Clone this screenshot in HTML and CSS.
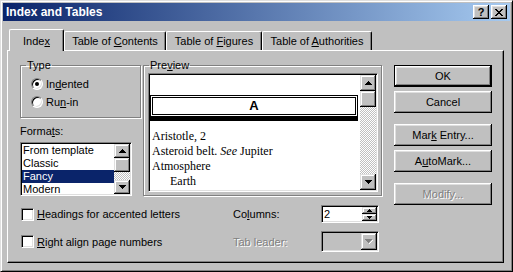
FILE: index.html
```html
<!DOCTYPE html>
<html lang="en">
<head>
    <meta charset="UTF-8">
    <title>Index and Tables</title>
    <link rel="stylesheet" href="styles.css">
</head>
<body>
    <div class="window">
        <!-- caption -->
        <div class="titlebar">
            <span class="title">Index and Tables</span>
            <div class="caption-btns">
                <span class="cap-btn help">?</span>
                <span class="cap-btn">
                    <svg width="8" height="7" viewBox="0 0 8 7" shape-rendering="crispEdges"><path d="M0 0h2v1h1v1h2V1h1V0h2v1H7v1H6v1H5v1h1v1h1v1h1v1H6V6H5V5H3v1H2v1H0V6h1V5h1V4h1V3H2V2H1V1H0z"/></svg>
                </span>
            </div>
        </div>

        <div class="tabs">
            <div class="tab active"><span>Inde<u>x</u></span></div>
            <div class="tab w-contents"><span>Table of <u>C</u>ontents</span></div>
            <div class="tab w-figures"><span>Table of <u>F</u>igures</span></div>
            <div class="tab w-authorities"><span>Table of <u>A</u>uthorities</span></div>
        </div>

        <div class="panel">
            <div class="left">
                <div class="top-row">
                    <div class="col-type">
                        <fieldset class="group type-group">
                            <legend>Type</legend>
                            <div class="radio"><span class="radio-box checked"></span><span>In<u>d</u>ented</span></div>
                            <div class="radio"><span class="radio-box"></span><span>Ru<u>n</u>-in</span></div>
                        </fieldset>
                        <div class="field-label">Forma<u>t</u>s:</div>
                        <div class="listbox">
                            <ul class="items">
                                <li>From template</li>
                                <li>Classic</li>
                                <li class="selected">Fancy</li>
                                <li>Modern</li>
                            </ul>
                            <div class="vscroll small">
                                <span class="sb-btn"><svg width="7" height="4" shape-rendering="crispEdges"><path d="M3 0h1v1h1v1h1v1h1v1H0V3h1V2h1V1h1z"/></svg></span>
                                <span class="sb-thumb"></span>
                                <span class="sb-track"></span>
                                <span class="sb-btn"><svg width="7" height="4" shape-rendering="crispEdges"><path d="M0 0h7v1H6v1H5v1H4v1H3V3H2V2H1V1H0z"/></svg></span>
                            </div>
                        </div>
                    </div>

                    <fieldset class="group preview-group">
                        <legend>Pre<u>v</u>iew</legend>
                        <div class="preview">
                            <div class="page">
                                <div class="letter">A</div>
                                <div class="entry">Aristotle, 2</div>
                                <div class="entry">Asteroid belt. <i>See</i> Jupiter</div>
                                <div class="entry">Atmosphere</div>
                                <div class="entry sub">Earth</div>
                            </div>
                            <div class="vscroll">
                                <span class="sb-btn"><svg width="7" height="4" shape-rendering="crispEdges"><path d="M3 0h1v1h1v1h1v1h1v1H0V3h1V2h1V1h1z"/></svg></span>
                                <span class="sb-thumb"></span>
                                <span class="sb-track"></span>
                                <span class="sb-btn"><svg width="7" height="4" shape-rendering="crispEdges"><path d="M0 0h7v1H6v1H5v1H4v1H3V3H2V2H1V1H0z"/></svg></span>
                            </div>
                        </div>
                    </fieldset>
                </div>

                <div class="options">
                    <div class="check"><span class="check-box"></span><span><u>H</u>eadings for accented letters</span></div>
                    <div>Co<u>l</u>umns:</div>
                    <div class="spin">
                        <span class="spin-val">2</span>
                        <div class="spin-btns">
                            <span class="spin-btn"><svg width="5" height="3" shape-rendering="crispEdges"><path d="M2 0h1v1h1v1h1v1H0V2h1V1h1z"/></svg></span>
                            <span class="spin-btn"><svg width="5" height="3" shape-rendering="crispEdges"><path d="M0 0h5v1H4v1H3v1H2V2H1V1H0z"/></svg></span>
                        </div>
                    </div>

                    <div class="check"><span class="check-box"></span><span><u>R</u>ight align page numbers</span></div>
                    <div class="disabled">Tab leader:</div>
                    <div class="combo">
                        <span class="combo-btn"><svg width="8" height="5" shape-rendering="crispEdges"><path d="M0 0h7v1H6v1H5v1H4v1H3V3H2V2H1V1H0z" fill="#808080"/><path d="M7 1h1v1H7v1H6v1H5v1H4V4h1V3h1V2h1z" fill="#fff"/></svg></span>
                    </div>
                </div>
            </div>

            <div class="buttons">
                <button class="btn default">OK</button>
                <button class="btn">Cancel</button>
                <button class="btn spaced">Mar<u>k</u> Entry...</button>
                <button class="btn">A<u>u</u>toMark...</button>
                <button class="btn spaced disabled">Modify...</button>
            </div>
        </div>
    </div>
</body>
</html>
```

FILE: styles.css
```css
* {
    box-sizing: border-box;
}
body {
    margin: 0;
    font-family: "Liberation Sans", Arial, sans-serif;
    font-size: 11px;
    color: #000;
}
u {
    text-decoration: underline;
}

/* window frame */
.window {
    width: 513px;
    height: 272px;
    background: #c0c0c0;
    border: 1px solid;
    border-color: #dfdfdf #000 #000 #dfdfdf;
    box-shadow: inset 1px 1px #fff, inset -1px -1px #808080;
    padding: 2px;
}
.titlebar {
    height: 18px;
    display: flex;
    align-items: center;
    justify-content: space-between;
    padding: 0 3px 0 3px;
    background: linear-gradient(to right, #0a246a, #a6caf0);
    color: #fff;
    font-weight: bold;
    font-size: 12px;
}
.caption-btns {
    display: flex;
    gap: 2px;
}
.cap-btn {
    width: 16px;
    height: 14px;
    display: flex;
    align-items: center;
    justify-content: center;
    background: #c0c0c0;
    color: #000;
    font-size: 11px;
    box-shadow: inset -1px -1px #000, inset 1px 1px #fff, inset -2px -2px #808080, inset 2px 2px #dfdfdf;
}
.cap-btn svg {
    margin-top: 1px;
}

/* tabs */
.tabs {
    display: flex;
    align-items: flex-end;
    height: 21px;
    margin: 8px 0 0 4px;
    padding-left: 2px;
}
.tab {
    height: 19px;
    display: flex;
    justify-content: center;
    padding-top: 3px;
    border-top: 1px solid #fff;
    border-left: 1px solid #fff;
    border-right: 1px solid #000;
    border-radius: 2px 2px 0 0;
    box-shadow: inset -1px 0 #808080;
    white-space: nowrap;
}
.tab.active {
    width: 55px;
    height: 22px;
    margin-bottom: -1px;
    padding-top: 5px;
    position: relative;
    z-index: 1;
    background: #c0c0c0;
}
.w-contents { width: 102px; }
.w-figures { width: 96px; }
.w-authorities { width: 110px; }

.panel {
    display: flex;
    gap: 12px;
    height: 213px;
    margin: 0 6px 0 4px;
    padding: 8px 0 0 12px;
    border: 1px solid;
    border-color: #fff #000 #000 #fff;
    box-shadow: inset -1px -1px #808080;
}
.left {
    width: 362px;
    display: flex;
    flex-direction: column;
}
.top-row {
    display: flex;
    gap: 2px;
}
.col-type {
    width: 121px;
}

/* group boxes */
.group {
    margin: 0;
    padding: 0;
    min-width: 0;
    border: 1px solid #808080;
    box-shadow: inset 1px 1px #fff, 1px 1px #fff;
}
.group legend {
    margin-left: 5px;
    padding: 0 1px;
    line-height: 13px;
}
.type-group {
    width: 121px;
    height: 59px;
    padding-top: 3px;
}
.radio {
    display: flex;
    align-items: center;
    gap: 3px;
    height: 18px;
    margin-left: 10px;
}
.radio-box {
    width: 12px;
    height: 12px;
    border-radius: 50%;
    background: #fff;
    border: 1px solid;
    border-color: #808080 #fff #fff #808080;
    box-shadow: inset 1px 1px #000, inset -1px -1px #dfdfdf;
    display: flex;
    align-items: center;
    justify-content: center;
}
.radio-box.checked::after {
    content: "";
    width: 4px;
    height: 4px;
    border-radius: 50%;
    background: #000;
}
.field-label {
    margin-top: 7px;
    line-height: 13px;
}

/* sunken fields */
.listbox,
.preview,
.spin,
.combo {
    display: flex;
    background: #fff;
    border: 1px solid;
    border-color: #808080 #fff #fff #808080;
    box-shadow: inset 1px 1px #000, inset -1px -1px #dfdfdf;
    padding: 1px;
}
.listbox {
    width: 112px;
    height: 54px;
    margin-top: 4px;
}
.items {
    flex: 1;
    margin: 0;
    padding: 0;
    list-style: none;
    overflow: hidden;
}
.items li {
    height: 13px;
    line-height: 13px;
    padding-left: 1px;
    white-space: nowrap;
}
.items li.selected {
    background: #0a246a;
    color: #fff;
}

/* scroll bars */
.vscroll {
    width: 16px;
    display: flex;
    flex-direction: column;
}
.sb-btn,
.sb-thumb,
.spin-btn,
.combo-btn {
    display: flex;
    align-items: center;
    justify-content: center;
    background: #c0c0c0;
    box-shadow: inset -1px -1px #000, inset 1px 1px #dfdfdf, inset -2px -2px #808080, inset 2px 2px #fff;
}
.sb-btn,
.sb-thumb {
    height: 16px;
}
.vscroll.small .sb-btn,
.vscroll.small .sb-thumb {
    height: 14px;
}
.sb-track {
    flex: 1;
    background: conic-gradient(#fff 25%, #c0c0c0 0 50%, #fff 0 75%, #c0c0c0 0) 0 0 / 2px 2px;
}

/* preview */
.preview-group {
    width: 239px;
    height: 137px;
    padding-top: 1px;
}
.preview {
    width: 230px;
    height: 119px;
    margin-left: 4px;
}
.page {
    flex: 1;
    overflow: hidden;
    font-family: "Liberation Serif", "Times New Roman", serif;
    font-size: 12px;
}
.letter {
    height: 26px;
    margin: 20px 2px 8px 0;
    border: 1px solid #000;
    border-bottom-width: 5px;
    box-shadow: inset 0 0 0 1px #fff, inset 0 0 0 2px #000;
    font-family: "Liberation Sans", Arial, sans-serif;
    font-weight: bold;
    font-size: 13px;
    line-height: 20px;
    text-align: center;
}
.entry {
    line-height: 15px;
    padding-left: 2px;
    white-space: nowrap;
}
.entry.sub {
    padding-left: 20px;
}

/* bottom options */
.options {
    display: grid;
    grid-template-columns: 212px 88px 58px;
    grid-template-rows: 18px 21px;
    row-gap: 8px;
    align-items: center;
    margin-top: 9px;
    padding-left: 1px;
}
.check {
    display: flex;
    align-items: center;
    gap: 3px;
}
.check-box {
    width: 13px;
    height: 13px;
    background: #fff;
    border: 1px solid;
    border-color: #808080 #fff #fff #808080;
    box-shadow: inset 1px 1px #000, inset -1px -1px #dfdfdf;
}
.spin {
    height: 18px;
}
.spin-val {
    flex: 1;
    padding-left: 1px;
    line-height: 14px;
}
.spin-btns {
    width: 15px;
    display: flex;
    flex-direction: column;
}
.spin-btn {
    height: 7px;
}
.combo {
    height: 21px;
    justify-content: flex-end;
    background: #c0c0c0;
}
.combo-btn {
    width: 16px;
}

/* push buttons */
.buttons {
    width: 98px;
    display: flex;
    flex-direction: column;
    gap: 4px;
    padding-top: 6px;
}
.btn {
    height: 22px;
    padding: 0;
    border: none;
    font: inherit;
    color: #000;
    background: #c0c0c0;
    box-shadow: inset -1px -1px #000, inset 1px 1px #fff, inset -2px -2px #808080, inset 2px 2px #dfdfdf;
}
.btn.default {
    border: 1px solid #000;
}
.btn.spaced {
    margin-top: 7px;
}
.disabled {
    color: #808080;
    text-shadow: 1px 1px 0 #fff;
}
```
